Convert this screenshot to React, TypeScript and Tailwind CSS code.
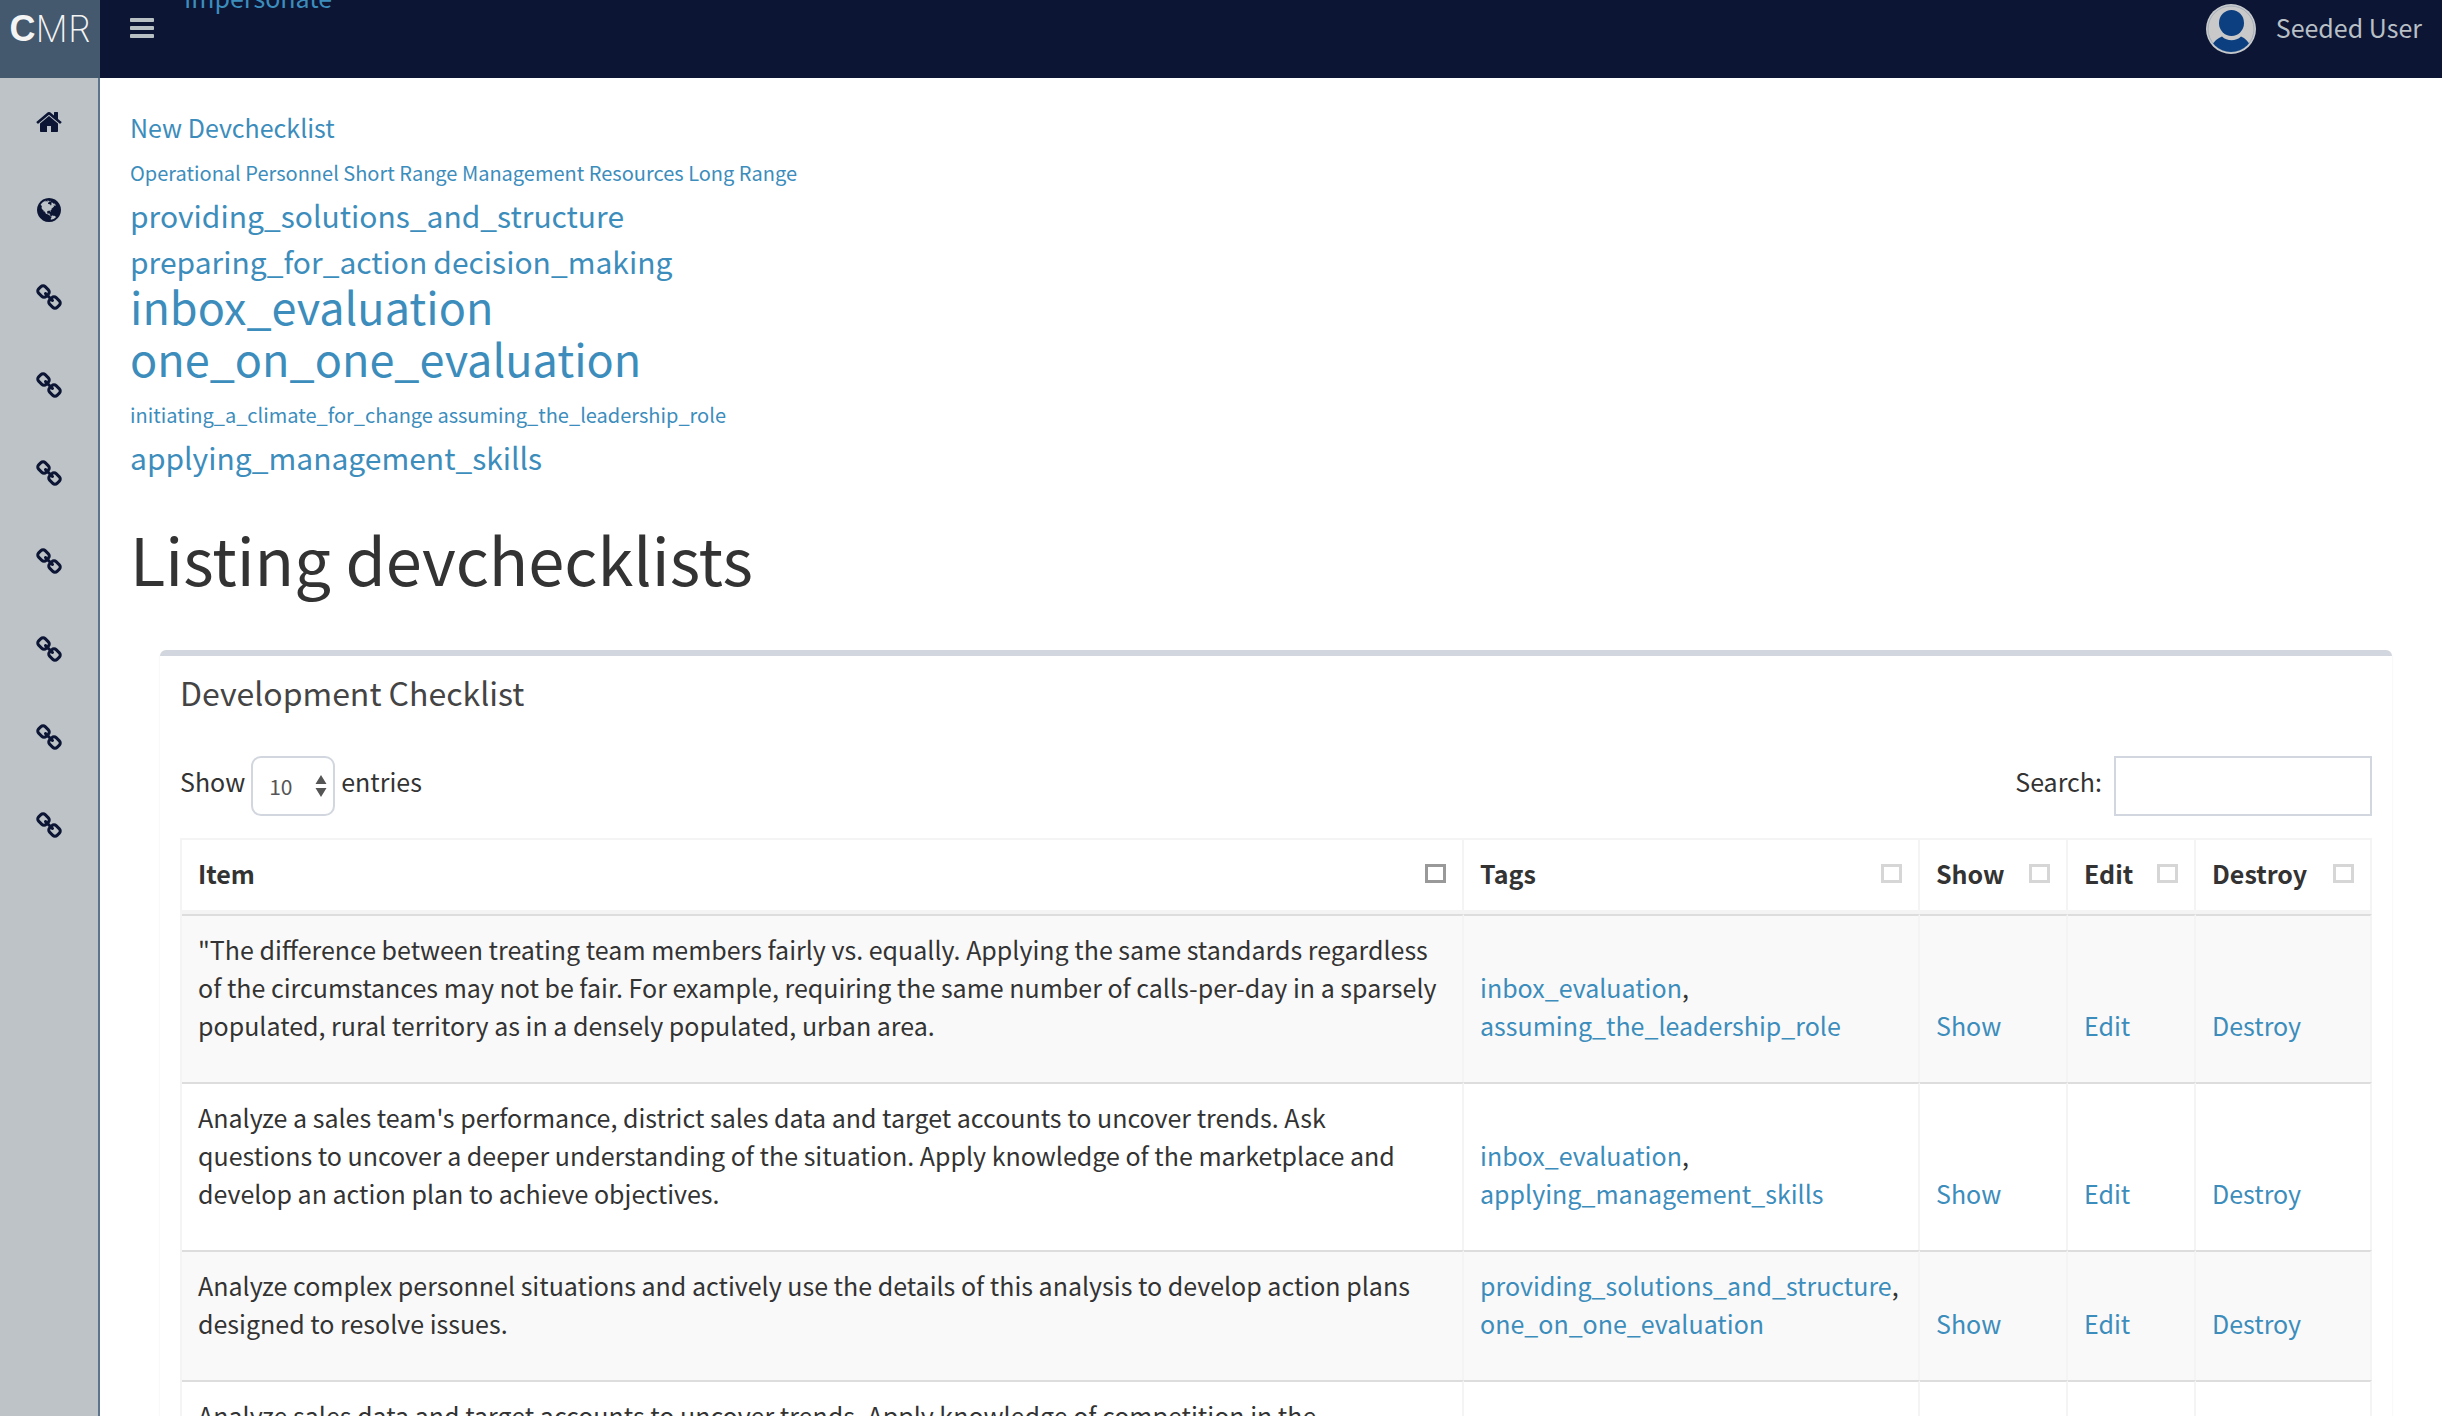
import type { ReactNode } from "react";

const PATHS = {
  home: "M1472 992v480q0 26-19 45t-45 19h-384v-384h-256v384h-384q-26 0-45-19t-19-45v-480q0-1 .5-3t.5-3l575-474 575 474q1 2 1 6zm223-69l-62 74q-8 9-21 11h-3q-13 0-21-7l-692-577-692 577q-12 8-24 7-13-2-21-11l-62-74q-8-10-7-23.5t11-21.5l719-599q32-26 76-26t76 26l244 204v-195q0-14 9-23t23-9h192q14 0 23 9t9 23v408l219 182q10 8 11 21.5t-7 23.5z",
  bars: "M1664 1344v128q0 26-19 45t-45 19h-1408q-26 0-45-19t-19-45v-128q0-26 19-45t45-19h1408q26 0 45 19t19 45zm0-512v128q0 26-19 45t-45 19h-1408q-26 0-45-19t-19-45v-128q0-26 19-45t45-19h1408q26 0 45 19t19 45zm0-512v128q0 26-19 45t-45 19h-1408q-26 0-45-19t-19-45v-128q0-26 19-45t45-19h1408q26 0 45 19t19 45z",
  chain: "M1520 1216q0-40-28-68l-208-208q-28-28-68-28-42 0-72 32 3 3 19 18.5t21.5 21.5 15 19 13 25.5 3.5 27.5q0 40-28 68t-68 28q-15 0-27.5-3.5t-25.5-13-19-15-21.5-21.5-18.5-19q-33 31-33 73 0 40 28 68l206 207q27 27 68 27 40 0 68-26l147-146q28-28 28-67zm-703-705q0-40-28-68l-206-207q-28-28-68-28-39 0-68 27l-147 146q-28 28-28 67 0 40 28 68l208 208q27 27 68 27 42 0 72-31-3-3-19-18.5t-21.5-21.5-15-19-13-25.5-3.5-27.5q0-40 28-68t68-28q15 0 27.5 3.5t25.5 13 19 15 21.5 21.5 18.5 19q33-31 33-73zm895 705q0 120-85 203l-147 146q-83 83-203 83-121 0-204-85l-206-207q-83-83-83-203 0-123 88-209l-88-88q-86 88-208 88-120 0-204-84l-208-208q-84-84-84-204t85-203l147-146q83-83 203-83 121 0 204 85l206 207q83 83 83 203 0 123-88 209l88 88q86-88 208-88 120 0 204 84l208 208q84 84 84 204z",
  globe: "M896 128q209 0 385.5 103t279.5 279.5 103 385.5-103 385.5-279.5 279.5-385.5 103-385.5-103-279.5-279.5-103-385.5 103-385.5 279.5-279.5 385.5-103zm274 521q-2 1-9.5 9.5t-13.5 9.5q2 0 4.5-5t5-11 3.5-7q6-7 22-15 14-6 52-12 34-8 51 11-2-2 9.5-13t14.5-12q3-2 15-4.5t15-7.5l2-22q-12 1-17.5-7t-6.5-21q0 2-6 8 0-7-4.5-8t-11.5 1-9 1q-10-3-15-7.5t-8-16.5-4-15q-2-5-9.5-10.5t-9.5-10.5q-1-2-2.5-5.5t-3-6.5-4-5.5-5.5-2.5-7 5-7.5 10-4.5 5q-3-2-6-1.5t-4.5 1-4.5 3-5 3.5q-3 2-8.5 3t-8.5 2q15-5-1-11-10-4-16-3 9-4 7.5-12t-8.5-14h5q-1-4-8.5-8.5t-17.5-8.5-13-6q-8-5-34-9.5t-33-.5q-5 6-4.5 10.5t4 14 3.5 12.5q1 6-5.5 13t-6.5 12q0 7 14 15.5t10 21.5q-3 8-16 16t-16 12q-5 8-1.5 18.5t10.5 16.5q2 2 1.5 4t-3.5 4.5-5.5 4-6.5 3.5l-3 2q-11 5-20.5-6t-13.5-26q-7-25-16-30-23-8-29 1-5-13-41-26-25-9-58-4 6-1 0-15-7-15-19-12 3-6 4-17.5t1-13.5q3-13 12-23 1-1 7-8.5t9.5-13.5.5-6q35 4 50-11 5-5 11.5-17t10.5-17q9-6 14-5.5t14.5 5.5 14.5 5q14 1 15.5-11t-7.5-20q12 1 3-17-4-7-8-9-12-4-27 5-8 4 2 8-1-1-9.5 10.5t-16.5 17.5-16-5q-1-1-5.5-13.5t-9.5-13.5q-8 0-16 15 3-8-11-15t-24-8q19-12-8-27-7-4-20.5-5t-19.5 4q-5 7-5.5 11.5t5 8 10.5 5.5 11.5 4 8.5 3q14 10 8 14-2 1-8.5 3.5t-11.5 4.5-6 4q-3 4 0 14t-2 14q-5-5-9-17.5t-7-16.5q7 9-25 6l-10-1q-4 0-16 2t-20.5 1-13.5-8q-4-8 0-20 1-4 4-2-4-3-11-9.5t-10-8.5q-46 15-94 41 6 1 12-1 5-2 13-6.5t10-5.5q34-14 42-7l5-5q14 16 20 25-7-4-30-1-20 6-22 12 7 12 5 18-4-3-11.5-10t-14.5-11-15-5q-16 0-22 1-146 80-235 222 7 7 12 8 4 1 5 9t2.5 11 11.5-3q9 8 3 19 1-1 44 27 19 17 21 21 3 11-10 18-1-2-9-9t-9-4q-3 5 .5 18.5t10.5 12.5q-7 0-9.5 16t-2.5 35.5-1 23.5l2 1q-3 12 5.5 34.5t21.5 19.5q-13 3 20 43 6 8 8 9 3 2 12 7.5t15 10 10 10.5q4 5 10 22.5t14 23.5q-2 6 9.5 20t10.5 23q-1 0-2.5 1t-2.5 1q3 7 15.5 14t15.5 13q1 3 2 10t3 11 8 2q2-20-24-62-15-25-17-29-3-5-5.5-15.5t-4.5-14.5q2 0 6 1.5t8.5 3.5 7.5 4 2 3q-3 7 2 17.5t12 18.5 17 19 12 13q6 6 14 19.5t0 13.5q9 0 20 10.5t17 19.5q5 8 8 26t5 24q2 7 8.5 13.5t12.5 9.5l16 8 13 7q5 2 18.5 10.5t21.5 11.5q10 4 16 4t14.5-2.5 13.5-3.5q15-2 29 15t21 21q36 19 55 11-2 1 .5 7.5t8 15.5 9 14.5 5.5 8.5q5 6 18 15t18 15q6-4 7-9-3 8 7 20t18 10q14-3 14-32-31 15-49-18 0-1-2.5-5.5t-4-8.5-2.5-8.5 0-7.5 5-3q9 0 10-3.5t-2-12.5-4-13q-1-8-11-20t-12-15q-5 9-16 8t-16-9q0 1-1.5 5.5t-1.5 6.5q-13 0-15-1 1-3 2.5-17.5t3.5-22.5q1-4 5.5-12t7.5-14.5 4-12.5-4.5-9.5-17.5-2.5q-19 1-26 20-1 3-3 10.5t-5 11.5-9 7q-7 3-24 2t-24-5q-13-8-22.5-29t-9.5-37q0-10 2.5-26.5t3-25-5.5-24.5q3-2 9-9.5t10-10.5q2-1 4.5-1.5t4.5 0 4-1.5 3-6q-1-1-4-3-3-3-4-3 7 3 28.5-1.5t27.5 1.5q15 11 22-2 0-1-2.5-9.5t-.5-13.5q5 27 29 9 3 3 15.5 5t17.5 5q3 2 7 5.5t5.5 4.5 5-.5 8.5-6.5q10 14 12 24 11 40 19 44 7 3 11 2t4.5-9.5 0-14-1.5-12.5l-1-8v-18l-1-8q-15-3-18.5-12t1.5-18.5 15-18.5q1-1 8-3.5t15.5-6.5 12.5-8q21-19 15-35 7 0 11-9-1 0-5-3t-7.5-5-4.5-2q9-5 2-16 5-3 7.5-11t7.5-10q9 12 21 2 8-8 1-16 5-7 20.5-10.5t18.5-9.5q7 2 8-2t1-12 3-12q4-5 15-9t13-5l17-11q3-4 0-4 18 2 31-11 10-11-6-20 3-6-3-9.5t-15-5.5q3-1 11.5-.5t10.5-1.5q15-10-7-16-17-5-43 12zm-163 877q206-36 351-189-3-3-12.5-4.5t-12.5-3.5q-18-7-24-8 1-7-2.5-13t-8-9-12.5-8-11-7q-2-2-7-6t-7-5.5-7.5-4.5-8.5-2-10 1l-3 1q-3 1-5.5 2.5t-5.5 3-4 3 0 2.5q-21-17-36-22-5-1-11-5.5t-10.5-7-10-1.5-11.5 7q-5 5-6 15t-2 13q-7-5 0-17.5t2-18.5q-3-6-10.5-4.5t-12 4.5-11.5 8.5-9 6.5-8.5 5.5-8.5 7.5q-3 4-6 12t-5 11q-2-4-11.5-6.5t-9.5-5.5q2 10 4 35t5 38q7 31-12 48-27 25-29 40-4 22 12 26 0 7-8 20.5t-7 21.5q0 6 2 16z",
};

type IconName = keyof typeof PATHS;

function Icon({ name }: { name: IconName }) {
  return (
    <svg className="size-7 shrink-0" viewBox="0 0 1792 1792" fill="currentColor" aria-hidden="true">
      <path d={PATHS[name]} />
    </svg>
  );
}

function Avatar() {
  return (
    <svg className="size-[50px] shrink-0" viewBox="0 0 50 50" aria-hidden="true">
      <defs>
        <clipPath id="avatar-disc">
          <circle cx="25" cy="25" r="23" />
        </clipPath>
      </defs>
      <circle cx="25" cy="25" r="25" fill="#c8cbce" />
      <circle cx="25" cy="25" r="23" fill="#c9c9c9" stroke="#9aa6b4" strokeWidth="0.8" />
      <g clipPath="url(#avatar-disc)" fill="#0b3f80">
        <ellipse cx="25.5" cy="19" rx="12.5" ry="13" />
        <path d="M5 43C8 37 12 34 16 32.5C21 37.5 30 37.5 35 32.5C39 34 43 38 45 43V50H5Z" />
      </g>
    </svg>
  );
}

const NAV: { icon: IconName; label: string }[] = [
  { icon: "home", label: "Home" },
  { icon: "globe", label: "Sites" },
  ...Array.from({ length: 7 }, (_, i) => ({ icon: "chain" as IconName, label: `Link ${i + 1}` })),
];

const ROWS: { item: string; tags: string[] }[] = [
  {
    item: '"The difference between treating team members fairly vs. equally. Applying the same standards regardless of the circumstances may not be fair. For example, requiring the same number of calls-per-day in a sparsely populated, rural territory as in a densely populated, urban area.',
    tags: ["inbox_evaluation", "assuming_the_leadership_role"],
  },
  {
    item: "Analyze a sales team's performance, district sales data and target accounts to uncover trends. Ask questions to uncover a deeper understanding of the situation. Apply knowledge of the marketplace and develop an action plan to achieve objectives.",
    tags: ["inbox_evaluation", "applying_management_skills"],
  },
  {
    item: "Analyze complex personnel situations and actively use the details of this analysis to develop action plans designed to resolve issues.",
    tags: ["providing_solutions_and_structure", "one_on_one_evaluation"],
  },
  {
    item: "Analyze sales data and target accounts to uncover trends. Apply knowledge of competition in the",
    tags: [],
  },
];

const COLUMNS = ["Item", "Tags", "Show", "Edit", "Destroy"];

function A({ children }: { children: ReactNode }) {
  return (
    <a href="#" className="text-[#3c8dbc] hover:underline">
      {children}
    </a>
  );
}

export default function App() {
  return (
    <div className="flex h-screen flex-col overflow-hidden bg-white font-['Noto_Sans_CJK_SC','Noto_Sans',sans-serif] text-[25px] leading-[38px] text-[#333]">
      <header className="flex h-[78px] shrink-0 overflow-hidden bg-[#0c1534]">
        <a
          href="#"
          className="flex w-[100px] items-start justify-center bg-[#44586e] pt-2 font-['Inter',sans-serif] text-4xl leading-[42px] text-[#f4f4f4]"
        >
          <span className="font-['Liberation_Sans',sans-serif] font-bold">C</span>
          <span className="font-extralight">MR</span>
        </a>
        <button type="button" aria-label="Toggle navigation" className="flex w-[84px] items-start pt-3.5 pl-7 text-[#b8c0c4]">
          <Icon name="bars" />
        </button>
        <div className="-mt-[22px]">
          <A>Impersonate</A>
        </div>
        <a href="#" className="ml-auto flex items-start gap-5 pt-1 pr-5 text-[#b8bfc5]">
          <Avatar />
          <span className="pt-1">Seeded User</span>
        </a>
      </header>

      <div className="flex min-h-0 flex-1">
        <nav className="flex w-[100px] shrink-0 flex-col border-r-2 border-[#5c748c] bg-[#bdc3c7] text-[#0c1534]">
          {NAV.map((n) => (
            <a key={n.label} href="#" aria-label={n.label} className="flex h-[88px] items-center justify-center">
              <Icon name={n.icon} />
            </a>
          ))}
        </nav>

        <main className="min-w-0 flex-1 pt-[30px] pr-5 pl-[30px]">
          <div>
            <A>New Devchecklist</A>
          </div>
          <div className="pt-2">
            <div className="text-xl leading-[38px]">
              <A>Operational</A> <A>Personnel</A> <A>Short Range</A> <A>Management</A> <A>Resources</A> <A>Long Range</A>
            </div>
            <div className="text-3xl leading-[46px]">
              <A>providing_solutions_and_structure</A>
            </div>
            <div className="flex gap-1.5 text-3xl leading-[46px]">
              <A>preparing_for_action</A>
              <A>decision_making</A>
            </div>
            <div className="-mt-1 flex flex-col items-start pb-3 text-[45px] leading-[52px]">
              <A>inbox_evaluation</A>
              <A>one_on_one_evaluation</A>
            </div>
            <div className="text-xl leading-[38px]">
              <A>initiating_a_climate_for_change</A> <A>assuming_the_leadership_role</A>
            </div>
            <div className="text-3xl leading-[46px]">
              <A>applying_management_skills</A>
            </div>
          </div>

          <h1 className="mt-[38px] text-[65px] leading-20">Listing devchecklists</h1>

          <section className="mx-[30px] mt-13 rounded-md border-t-6 border-[#d2d6de] px-5 shadow-[0_2px_2px_rgba(0,0,0,0.1)]">
            <h2 className="pt-3 text-[32px] leading-12 text-[#444]">Development Checklist</h2>
            <div className="mt-10 flex items-start justify-between">
              <div className="flex items-start gap-1.5">
                <label htmlFor="page-size" className="pt-1.5">
                  Show
                </label>
                <span className="relative flex">
                  <select
                    id="page-size"
                    defaultValue="10"
                    className="h-[60px] w-[84px] appearance-none rounded-[10px] border-2 border-[#d2d6de] bg-white pl-4 text-[21px] text-[#555]"
                  >
                    <option>10</option>
                    <option>25</option>
                    <option>50</option>
                    <option>100</option>
                  </select>
                  <svg
                    className="pointer-events-none absolute top-[19px] right-2 h-[22px] w-3"
                    viewBox="0 0 12 22"
                    fill="#555"
                    aria-hidden="true"
                  >
                    <path d="M6 0L11.5 9H.5ZM6 22L.5 13H11.5Z" />
                  </svg>
                </span>
                <span className="pt-1.5">entries</span>
              </div>
              <div className="flex items-start gap-3">
                <label htmlFor="search" className="pt-1.5">
                  Search:
                </label>
                <input id="search" type="search" className="h-[60px] w-[258px] border-2 border-[#d2d6de] bg-white px-4" />
              </div>
            </div>

            <table className="mt-[22px] w-full table-fixed border-separate border-spacing-0 border-t-2 border-l-2 border-[#f4f4f4]">
              <colgroup>
                <col />
                <col className="w-[456px]" />
                <col className="w-[148px]" />
                <col className="w-[128px]" />
                <col className="w-[176px]" />
              </colgroup>
              <thead>
                <tr>
                  {COLUMNS.map((c, i) => (
                    <th
                      key={c}
                      scope="col"
                      className="border-r-2 border-b-4 border-[#f4f4f4] px-4 pt-3.5 pb-[18px] text-left font-bold"
                    >
                      <button type="button" className="flex w-full items-center justify-between">
                        {c}
                        <span
                          className={
                            i === 0 ? "h-[19px] w-[21px] border-3 border-[#999]" : "h-[19px] w-[21px] border-3 border-[#d6d6d6]"
                          }
                        />
                      </button>
                    </th>
                  ))}
                </tr>
              </thead>
              <tbody>
                {ROWS.map((r) => (
                  <tr
                    key={r.item}
                    className="odd:bg-[#f9f9f9] [&>td]:border-t-2 [&>td]:border-r-2 [&>td]:border-t-[#ddd] [&>td]:border-r-[#f4f4f4] [&>td]:px-4 [&>td]:pt-3.5 [&>td]:pb-[38px] [&>td]:align-bottom [&>td:first-child]:pr-5"
                  >
                    <td className={r.tags.length ? "" : "h-[168px] align-top!"}>{r.item}</td>
                    <td>
                      {r.tags.map((t, i) => (
                        <div key={t}>
                          <A>{t}</A>
                          {i < r.tags.length - 1 && ","}
                        </div>
                      ))}
                    </td>
                    <td>
                      <A>Show</A>
                    </td>
                    <td>
                      <A>Edit</A>
                    </td>
                    <td>
                      <A>Destroy</A>
                    </td>
                  </tr>
                ))}
              </tbody>
            </table>
          </section>
        </main>
      </div>
    </div>
  );
}
